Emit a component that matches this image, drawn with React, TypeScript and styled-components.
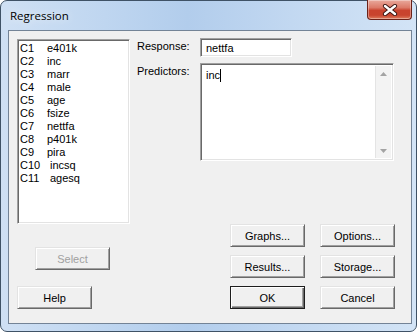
import styled, { createGlobalStyle, css } from "styled-components";

const GlobalStyle = createGlobalStyle`
  html, body {
    margin: 0;
    padding: 0;
    background: #ffffff;
  }
  * {
    box-sizing: border-box;
  }
`;

const columns = [
  ["C1", "e401k"],
  ["C2", "inc"],
  ["C3", "marr"],
  ["C4", "male"],
  ["C5", "age"],
  ["C6", "fsize"],
  ["C7", "nettfa"],
  ["C8", "p401k"],
  ["C9", "pira"],
  ["C10", "incsq"],
  ["C11", "agesq"],
];

export default function App() {
  return (
    <>
      <GlobalStyle />
      <Window>
        <TitleBar>
          <Title>Regression</Title>
          <CloseButton>
            <svg width="16" height="12" viewBox="0 0 16 12">
              <path d="M3 2 L13 10 M13 2 L3 10" stroke="#3a1410" strokeWidth="4.2" strokeLinecap="round" />
              <path d="M3 2 L13 10 M13 2 L3 10" stroke="#ffffff" strokeWidth="2.4" strokeLinecap="round" />
            </svg>
          </CloseButton>
        </TitleBar>
        <Client>
          <LeftColumn>
            <ListBox>
              {columns.map(([code, name]) => (
                <ListItem key={code}>
                  <ItemCode>{code}</ItemCode>
                  <ItemName $shift={code.length > 2}>{name}</ItemName>
                </ListItem>
              ))}
            </ListBox>
            <Button $disabled $offset={18} $top={23}>
              Select
            </Button>
            <Button $top={16}>Help</Button>
          </LeftColumn>
          <RightColumn>
            <FieldRow>
              <Label>Response:</Label>
              <TextBox>nettfa</TextBox>
            </FieldRow>
            <FieldRow $gap={6}>
              <Label>Predictors:</Label>
              <MemoBox>
                <MemoText>
                  inc
                  <Caret />
                </MemoText>
                <ScrollBar>
                  <svg width="7" height="4" viewBox="0 0 7 4">
                    <path d="M0 4 L3.5 0 L7 4 Z" fill="#a3a3a3" />
                  </svg>
                  <svg width="7" height="4" viewBox="0 0 7 4">
                    <path d="M0 0 L3.5 4 L7 0 Z" fill="#a3a3a3" />
                  </svg>
                </ScrollBar>
              </MemoBox>
            </FieldRow>
            <ButtonGrid>
              <Button>Graphs...</Button>
              <Button>Options...</Button>
              <Button>Results...</Button>
              <Button>Storage...</Button>
              <Button $default>OK</Button>
              <Button>Cancel</Button>
            </ButtonGrid>
          </RightColumn>
        </Client>
      </Window>
    </>
  );
}

const Window = styled.div`
  width: 417px;
  height: 332px;
  display: flex;
  flex-direction: column;
  border: 1px solid #3f5266;
  border-radius: 7px;
  background: linear-gradient(
    to right,
    #cfe0f4 0%,
    #bfd6f0 25%,
    #b2cdec 45%,
    #c2d8f1 70%,
    #d3e4f6 100%
  );
  padding: 0 4px 7px 7px;
  font-family: Tahoma, "Liberation Sans", Arial, sans-serif;
  font-size: 11px;
  color: #000;
`;

const TitleBar = styled.div`
  height: 29px;
  display: flex;
  justify-content: space-between;
  align-items: flex-start;
`;

const Title = styled.div`
  font-family: "Segoe UI", "Open Sans", "Noto Sans", sans-serif;
  font-size: 11.5px;
  line-height: 14px;
  margin-top: 8px;
  margin-left: 2px;
  color: #000;
  text-shadow: 0 0 8px rgba(255, 255, 255, 0.9);
`;

const CloseButton = styled.div`
  width: 45px;
  height: 20px;
  margin-top: -1px;
  display: flex;
  align-items: center;
  justify-content: center;
  border: 1px solid #6b2219;
  border-top: none;
  border-radius: 0 0 4px 4px;
  background: linear-gradient(
    to bottom,
    #e9a99c 0%,
    #dc7a68 40%,
    #c9432e 55%,
    #c8442e 80%,
    #dd7c5d 100%
  );
  box-shadow: inset 0 0 0 1px rgba(255, 255, 255, 0.35);
`;

const Client = styled.div`
  flex: 1;
  display: flex;
  gap: 7px;
  background: #f0f0f0;
  border: 1px solid #738396;
  padding: 8px 16px 14px 8px;
`;

const LeftColumn = styled.div`
  width: 113px;
  display: flex;
  flex-direction: column;
  align-items: flex-start;
`;

const sunken = css`
  border: 1px solid;
  border-color: #a0a0a0 #ffffff #ffffff #a0a0a0;
  box-shadow: inset 1px 1px #696969, inset -1px -1px #e3e3e3;
  background: #ffffff;
`;

const ListBox = styled.div`
  ${sunken};
  width: 113px;
  height: 185px;
  padding: 2px 2px;
`;

const ListItem = styled.div`
  display: flex;
  height: 13px;
  line-height: 13px;
  white-space: nowrap;
`;

const ItemCode = styled.span`
  width: 27px;
`;

const ItemName = styled.span<{ $shift?: boolean }>`
  padding-left: ${(p) => (p.$shift ? 3 : 0)}px;
`;

const Button = styled.div<{
  $disabled?: boolean;
  $default?: boolean;
  $offset?: number;
  $top?: number;
}>`
  width: 75px;
  height: 23px;
  margin-left: ${(p) => p.$offset ?? 0}px;
  margin-top: ${(p) => p.$top ?? 0}px;
  display: flex;
  align-items: center;
  justify-content: center;
  background: #f0f0f0;
  color: ${(p) => (p.$disabled ? "#a0a0a0" : "#000")};
  border: 1px solid;
  border-color: #e3e3e3 #696969 #696969 #e3e3e3;
  box-shadow: inset 1px 1px #ffffff, inset -1px -1px #a0a0a0;
  ${(p) =>
    p.$default &&
    css`
      border-color: #1e1e1e;
      box-shadow: inset 1px 1px #ffffff, inset -1px -1px #696969,
        inset -2px -2px #a0a0a0;
    `}
`;

const RightColumn = styled.div`
  flex: 1;
  display: flex;
  flex-direction: column;
`;

const FieldRow = styled.div<{ $gap?: number }>`
  display: flex;
  margin-top: ${(p) => (p.$gap ?? -1)}px;
`;

const Label = styled.div`
  width: 63px;
  padding-top: 2px;
  line-height: 13px;
`;

const TextBox = styled.div`
  ${sunken};
  width: 92px;
  height: 19px;
  padding: 2px 0 0 5px;
  line-height: 14px;
`;

const MemoBox = styled.div`
  ${sunken};
  width: 194px;
  height: 98px;
  display: flex;
  padding: 2px 2px 2px 2px;
`;

const MemoText = styled.div`
  flex: 1;
  padding: 3px 0 0 3px;
  line-height: 13px;
  display: flex;
  align-items: flex-start;
`;

const Caret = styled.span`
  display: inline-block;
  width: 1px;
  height: 13px;
  background: #000;
`;

const ScrollBar = styled.div`
  width: 16px;
  display: flex;
  flex-direction: column;
  justify-content: space-between;
  align-items: center;
  padding: 6px 0 5px;
  background: #f3f3f3;
  border-left: 1px solid #e4e4e4;
`;

const ButtonGrid = styled.div`
  margin-top: auto;
  display: grid;
  grid-template-columns: 75px 75px;
  grid-auto-rows: 23px;
  column-gap: 15px;
  row-gap: 8px;
  justify-content: end;
`;
